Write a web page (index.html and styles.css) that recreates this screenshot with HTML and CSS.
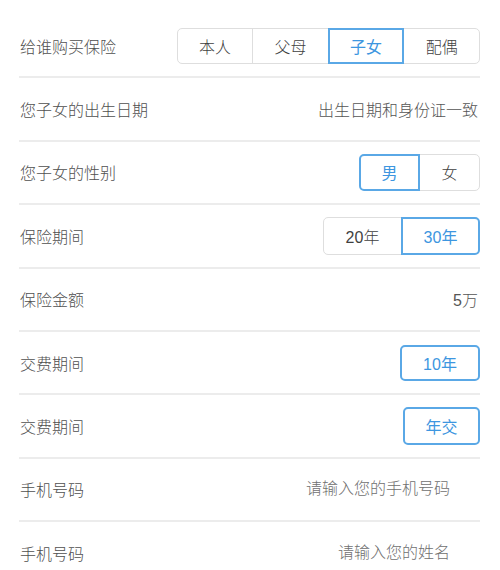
FILE: index.html
```html
<!DOCTYPE html>
<html lang="zh-CN">
<head>
<meta charset="utf-8">
<title>保险</title>
<link rel="stylesheet" href="styles.css">
</head>
<body>
<div class="form">
  <div class="row">
    <span class="label">给谁购买保险</span>
    <div class="seg seg-who">
      <span class="opt">本人</span>
      <span class="opt">父母</span>
      <span class="opt on">子女</span>
      <span class="opt">配偶</span>
    </div>
  </div>
  <div class="row">
    <span class="label">您子女的出生日期</span>
    <span class="value">出生日期和身份证一致</span>
  </div>
  <div class="row">
    <span class="label">您子女的性别</span>
    <div class="seg seg-sex">
      <span class="opt on">男</span>
      <span class="opt">女</span>
    </div>
  </div>
  <div class="row">
    <span class="label">保险期间</span>
    <div class="seg seg-term">
      <span class="opt">20年</span>
      <span class="opt on">30年</span>
    </div>
  </div>
  <div class="row">
    <span class="label">保险金额</span>
    <span class="value">5万</span>
  </div>
  <div class="row">
    <span class="label">交费期间</span>
    <div class="seg seg-single seg-pay">
      <span class="opt on">10年</span>
    </div>
  </div>
  <div class="row">
    <span class="label">交费期间</span>
    <div class="seg seg-single seg-freq">
      <span class="opt on">年交</span>
    </div>
  </div>
  <div class="row">
    <span class="label">手机号码</span>
    <input class="field" type="text" placeholder="请输入您的手机号码">
  </div>
  <div class="row">
    <span class="label">手机号码</span>
    <input class="field" type="text" placeholder="请输入您的姓名">
  </div>
</div>
</body>
</html>
```
FILE: styles.css
```css
html, body {
  margin: 0;
  padding: 0;
  background: #ffffff;
}

body {
  font-family: "Liberation Sans", "Noto Sans CJK SC", sans-serif;
  font-size: 16px;
  font-weight: 300;
  color: #555555;
}

.form {
  width: 461px;
  margin-left: 19px;
  padding-top: 15px;
}

.row {
  display: flex;
  align-items: center;
  justify-content: space-between;
  height: 61.4px;
  border-bottom: 2px solid #ececec;
}

.label {
  padding-left: 1px;
  color: #4f4f4f;
}

.value {
  color: #555555;
  padding-right: 2px;
}

.seg {
  display: flex;
  height: 36px;
}

.opt {
  display: flex;
  align-items: center;
  justify-content: center;
  box-sizing: border-box;
  height: 100%;
  border: 1px solid #dedede;
  margin-left: -1px;
  color: #3f3f3f;
  position: relative;
}

.opt:first-child {
  margin-left: 0;
  border-radius: 5px 0 0 5px;
}

.opt:last-child {
  border-radius: 0 5px 5px 0;
}

.opt.on {
  border: 2px solid #5aa8e6;
  color: #3d96e0;
  font-weight: 400;
  z-index: 1;
}

.seg-who .opt { width: 76.6px; }
.seg-sex { height: 37px; }
.seg-sex .opt { width: 61px; }
.seg-term { height: 38px; }
.seg-term .opt { width: 79px; }

.seg-single .opt { border-radius: 5px; }
.seg-pay .opt { width: 80px; }
.seg-freq { height: 38px; }
.seg-freq .opt { width: 77px; }

.field {
  width: 260px;
  box-sizing: border-box;
  border: none;
  outline: none;
  padding: 0 30px 0 0;
  margin: 0;
  font: inherit;
  text-align: right;
  color: #555555;
  background: transparent;
}

.field::placeholder {
  color: #707070;
}
```
